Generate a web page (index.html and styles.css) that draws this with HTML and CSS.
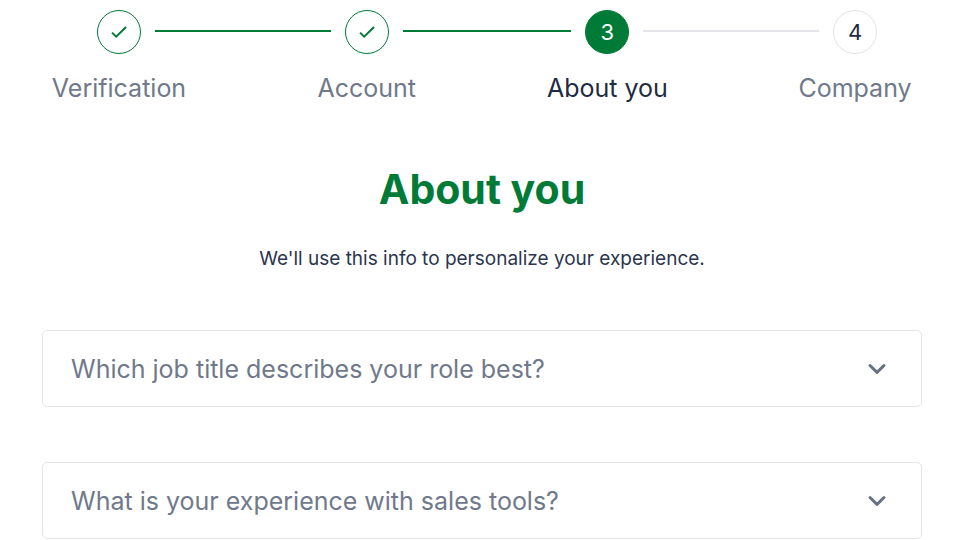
FILE: index.html
```html
<!DOCTYPE html>
<html lang="en">
<head>
    <meta charset="UTF-8">
    <meta name="viewport" content="width=device-width, initial-scale=1.0">
    <title>About you</title>
    <link rel="stylesheet" href="styles.css">
</head>

<body>
    <main class="signup">
        <ol class="steps">
            <li class="step done">
                <span class="step-circle">
                    <svg width="18" height="14" viewBox="0 0 18 14" aria-hidden="true"><path d="M2 7.6 L6.2 11.6 L16 2"/></svg>
                </span>
                <span class="step-name">Verification</span>
            </li>
            <li class="connector done" aria-hidden="true"></li>
            <li class="step done">
                <span class="step-circle">
                    <svg width="18" height="14" viewBox="0 0 18 14" aria-hidden="true"><path d="M2 7.6 L6.2 11.6 L16 2"/></svg>
                </span>
                <span class="step-name">Account</span>
            </li>
            <li class="connector done" aria-hidden="true"></li>
            <li class="step current" aria-current="step">
                <span class="step-circle">3</span>
                <span class="step-name">About you</span>
            </li>
            <li class="connector" aria-hidden="true"></li>
            <li class="step">
                <span class="step-circle">4</span>
                <span class="step-name">Company</span>
            </li>
        </ol>

        <h1>About you</h1>
        <p class="intro">We'll use this info to personalize your experience.</p>

        <form class="questions">
            <div class="field">
                <select id="jobTitle" name="jobTitle" aria-label="Which job title describes your role best?">
                    <option value="">Which job title describes your role best?</option>
                </select>
                <svg class="chevron" width="20" height="12" viewBox="0 0 20 12" aria-hidden="true"><path d="M3 2.5 L10 9.3 L17 2.5"/></svg>
            </div>
            <div class="field">
                <select id="experience" name="experience" aria-label="What is your experience with sales tools?">
                    <option value="">What is your experience with sales tools?</option>
                </select>
                <svg class="chevron" width="20" height="12" viewBox="0 0 20 12" aria-hidden="true"><path d="M3 2.5 L10 9.3 L17 2.5"/></svg>
            </div>
        </form>
    </main>
</body>
</html>
```

FILE: styles.css
```css
* {
    box-sizing: border-box;
}
body {
    margin: 0;
    background-color: #FFFFFF;
    color: #1F2A44;
    font-family: Inter, "Liberation Sans", sans-serif;
}
.signup {
    padding: 10px 38px 0 42px;
}

/* Progress steps */
.steps {
    display: grid;
    grid-template-columns: 44px 204fr 44px 197fr 44px 204fr 44px;
    margin: 0;
    padding: 0 45px 0 55px;
    list-style: none;
}
.step {
    display: flex;
    flex-direction: column;
    align-items: center;
    gap: 18px;
}
.step-circle {
    display: flex;
    align-items: center;
    justify-content: center;
    width: 44px;
    height: 44px;
    border: 1px solid #E2E3E8;
    border-radius: 50%;
    font-size: 22px;
}
.step-circle svg {
    fill: none;
    stroke: #007A37;
    stroke-width: 2;
}
.step-name {
    color: #6F798B;
    font-size: 25px;
    line-height: 33px;
    white-space: nowrap;
}
.step.done .step-circle {
    border-color: #007A37;
}
.step.current .step-circle {
    border-color: #007A37;
    background-color: #007A37;
    color: #FFFFFF;
}
.step.current .step-name {
    color: #1F2A44;
}
.connector {
    height: 2px;
    margin: 20px 14px 0;
    background-color: #E4E5EB;
}
.connector.done {
    background-color: #007A37;
}

h1 {
    margin: 59px 0 0;
    color: #007A37;
    font-size: 41px;
    font-weight: 700;
    line-height: 50px;
    text-align: center;
}
.intro {
    margin: 31px 0 0;
    color: #2B3550;
    font-size: 19px;
    line-height: 28px;
    text-align: center;
}

/* Drop-downs */
.questions {
    display: flex;
    flex-direction: column;
    gap: 55px;
    margin-top: 57px;
}
.field {
    position: relative;
}
.field select {
    display: block;
    width: 100%;
    height: 77px;
    padding: 0 80px 0 28px;
    border: 1px solid #E6E6E8;
    border-radius: 5px;
    background-color: #FFFFFF;
    color: #6F798B;
    font-family: inherit;
    font-size: 25px;
    appearance: none;
}
.chevron {
    position: absolute;
    top: 33px;
    right: 35px;
    fill: none;
    stroke: #697282;
    stroke-width: 3;
    stroke-linecap: round;
    stroke-linejoin: round;
    pointer-events: none;
}
```
